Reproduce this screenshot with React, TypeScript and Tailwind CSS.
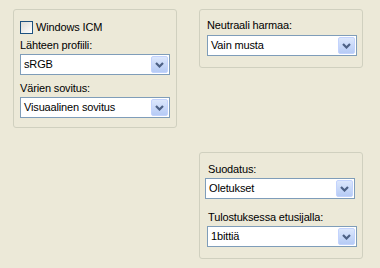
import React from "react"

const font = { fontFamily: '"Liberation Sans", Arial, sans-serif' }

const Chevron = () => (
  <svg width="9" height="6" viewBox="0 0 9 6">
    <polyline points="1,1 4.5,4.5 8,1" fill="none" stroke="#4d6185" strokeWidth="2.2" />
  </svg>
)

const Select = ({ value, className = "" }: { value: string; className?: string }) => (
  <div className={`flex h-[21px] w-[150px] items-center border border-[#7f9db9] bg-white ${className}`}>
    <span className="flex-1 pl-[3px] text-[11px] leading-none tracking-[-0.15px] text-black">{value}</span>
    <div className="mr-[1px] flex h-[17px] w-[17px] items-center justify-center rounded-[2px] border border-[#c3d3fd] bg-gradient-to-b from-[#dce7fc] to-[#b6cbf5]">
      <Chevron />
    </div>
  </div>
)

const Label = ({ children, className = "" }: { children: React.ReactNode; className?: string }) => (
  <div className={`text-[11px] leading-[13px] tracking-[-0.15px] text-black ${className}`}>{children}</div>
)

const Panel = ({ children, className = "" }: { children: React.ReactNode; className?: string }) => (
  <div className={`w-[164px] rounded-[3px] border border-[#d0d0bf] ${className}`}>{children}</div>
)

export default function App() {
  return (
    <div className="flex h-[268px] w-[380px] bg-[#ece9d8]" style={font}>
      <div className="ml-[13px] mt-[9px]">
        <Panel className="h-[119px] px-[6px] pt-[11px]">
          <label className="flex items-center gap-[3px]">
            <span className="h-[13px] w-[13px] border border-[#1c5180] bg-gradient-to-br from-[#dcdcd7] to-white" />
            <span className="text-[11px] leading-[13px] tracking-[-0.15px] text-black">Windows ICM</span>
          </label>
          <Label className="mt-[5px]">Lähteen profiili:</Label>
          <Select value="sRGB" className="mt-[2px]" />
          <Label className="mt-[7px]">Värien sovitus:</Label>
          <Select value="Visuaalinen sovitus" className="mt-[2px]" />
        </Panel>
      </div>
      <div className="ml-[22px] mt-[9px] flex flex-col">
        <Panel className="h-[59px] pl-[7px] pt-[9px]">
          <Label>Neutraali harmaa:</Label>
          <Select value="Vain musta" className="mt-[3px]" />
        </Panel>
        <Panel className="mt-[84px] h-[107px] pl-[5px] pt-[10px]">
          <Label className="ml-[3px]">Suodatus:</Label>
          <Select value="Oletukset" className="mt-[2px]" />
          <Label className="ml-[3px] mt-[12px]">Tulostuksessa etusijalla:</Label>
          <Select value="1bittiä" className="ml-[2px] mt-[2px]" />
        </Panel>
      </div>
    </div>
  )
}
